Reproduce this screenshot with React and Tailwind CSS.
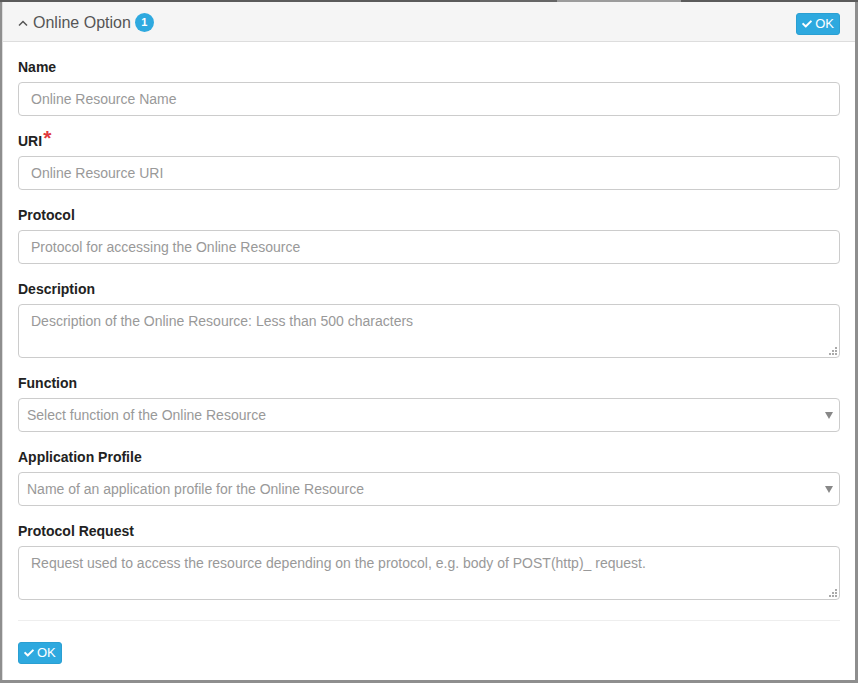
import React from "react";
import { FaCheck } from "react-icons/fa";

const font = { fontFamily: '"Liberation Sans", Arial, sans-serif' };

const Grip = () => (
  <svg
    width="8"
    height="8"
    viewBox="0 0 8 8"
    className="absolute right-[3px] bottom-[3px]"
  >
    <rect x="6" y="0" width="2" height="2" fill="#aaa" />
    <rect x="3" y="3" width="2" height="2" fill="#aaa" />
    <rect x="6" y="3" width="2" height="2" fill="#aaa" />
    <rect x="0" y="6" width="2" height="2" fill="#aaa" />
    <rect x="3" y="6" width="2" height="2" fill="#aaa" />
    <rect x="6" y="6" width="2" height="2" fill="#aaa" />
  </svg>
);

const Label = ({ children, required }) => (
  <label className="flex items-start h-5 mb-[5px] text-[14px] font-bold text-[#222] leading-5">
    {children}
    {required && (
      <span className="text-[#e0393e] text-[21px] leading-[16px] ml-[1px] -mt-[1px]">*</span>
    )}
  </label>
);

const TextInput = ({ placeholder }) => (
  <input
    type="text"
    placeholder={placeholder}
    className="w-full h-[34px] px-3 border border-[#ccc] rounded-[4px] text-[14px] text-[#555] placeholder:text-[#999] outline-none"
  />
);

const TextArea = ({ placeholder }) => (
  <div className="relative">
    <textarea
      placeholder={placeholder}
      className="block w-full h-[54px] px-3 py-[6px] border border-[#ccc] rounded-[4px] text-[14px] leading-5 text-[#555] placeholder:text-[#999] outline-none resize-none"
    />
    <Grip />
  </div>
);

const Select = ({ placeholder }) => (
  <div className="flex items-center justify-between w-full h-[34px] pl-2 pr-[6px] border border-[#ccc] rounded-[4px] text-[14px] text-[#999] bg-white">
    <span>{placeholder}</span>
    <svg width="8" height="7" viewBox="0 0 8 7">
      <path d="M0 0 H8 L4 7 Z" fill="#888" />
    </svg>
  </div>
);

const OkButton = ({ className = "" }) => (
  <button
    className={`flex items-center gap-[3px] h-[22px] px-[5px] bg-[#2ea9df] text-white text-[13px] rounded-[3px] border border-[#2a9fd2] ${className}`}
  >
    <FaCheck className="w-[10px] h-[10px]" />
    OK
  </button>
);

const Field = ({ label, required, children }) => (
  <div className="mb-[15px]">
    <Label required={required}>{label}</Label>
    {children}
  </div>
);

export default function App() {
  return (
    <div className="w-[858px] h-[683px] bg-[#8e8e8e] flex flex-col" style={font}>
      <div className="flex h-[2px] shrink-0">
        <div className="w-[480px] bg-[#5b5b5b]" />
        <div className="w-[77px] bg-[#666]" />
        <div className="w-[124px] bg-[#9c9c9c]" />
        <div className="flex-1 bg-[#5b5b5b]" />
      </div>
      <div className="flex-1 pl-[2px] pr-[3px] pb-[3px]">
        <div className="h-full bg-white border-l border-[#ddd]">
          <div className="flex items-center justify-between h-10 pl-[15px] pr-[15px] bg-[#f5f5f5] border-b border-[#ddd]">
            <div className="flex items-center mt-[2px]">
              <svg width="10" height="7" viewBox="0 0 10 7" className="mr-[5px] mt-[1px]">
                <path d="M1 5.5 L5 1.5 L9 5.5" fill="none" stroke="#555" strokeWidth="1.5" />
              </svg>
              <span className="text-[16px] text-[#555]">Online Option</span>
              <span className="ml-[4px] w-[19px] h-[19px] rounded-full bg-[#2ea9df] text-white text-[11px] font-bold flex items-center justify-center">
                1
              </span>
            </div>
            <OkButton className="mt-[5px]" />
          </div>
          <div className="pt-[15px] px-[15px]">
            <Field label="Name">
              <TextInput placeholder="Online Resource Name" />
            </Field>
            <Field label="URI" required>
              <TextInput placeholder="Online Resource URI" />
            </Field>
            <Field label="Protocol">
              <TextInput placeholder="Protocol for accessing the Online Resource" />
            </Field>
            <Field label="Description">
              <TextArea placeholder="Description of the Online Resource: Less than 500 characters" />
            </Field>
            <Field label="Function">
              <Select placeholder="Select function of the Online Resource" />
            </Field>
            <Field label="Application Profile">
              <Select placeholder="Name of an application profile for the Online Resource" />
            </Field>
            <Field label="Protocol Request">
              <TextArea placeholder="Request used to access the resource depending on the protocol, e.g. body of POST(http)_ request." />
            </Field>
            <div className="mt-[20px] border-t border-[#eee]" />
            <div className="pt-[21px]">
              <OkButton />
            </div>
          </div>
        </div>
      </div>
    </div>
  );
}
